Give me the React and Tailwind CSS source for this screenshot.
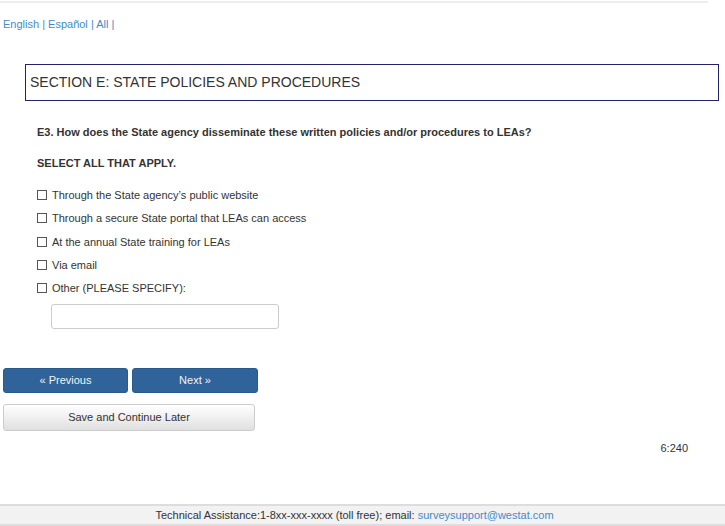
const options = [
  'Through the State agency’s public website',
  'Through a secure State portal that LEAs can access',
  'At the annual State training for LEAs',
  'Via email',
  'Other (PLEASE SPECIFY):',
];

export default function App() {
  return (
    <div className="relative h-[526px] w-[725px] overflow-hidden bg-white font-['Liberation_Sans',Arial,sans-serif] text-[#333]">
      {/* top rule */}
      <div className="mt-[1px] h-[2px] w-[708px] bg-[#eee]" />

      {/* language links */}
      <div className="mt-[14px] pl-[3px] text-[11px] leading-[14px] text-[#428bca]">
        <span>English</span> | <span>Español</span> | <span>All</span> |
      </div>

      {/* section header */}
      <div className="ml-[25px] mt-[33px] flex h-[37px] w-[694px] items-center border border-[#22226e] pl-[4px] text-[14px]">
        SECTION E: STATE POLICIES AND PROCEDURES
      </div>

      <div className="pl-[37px]">
        <p className="mt-[24px] text-[11px] font-bold leading-[14px]">
          E3. How does the State agency disseminate these written policies and/or procedures to LEAs?
        </p>
        <p className="mt-[17px] text-[11px] font-bold leading-[14px]">SELECT ALL THAT APPLY.</p>

        <div className="mt-[18px] flex flex-col gap-[9.3px]">
          {options.map(o => (
            <label key={o} className="flex h-[14px] items-center text-[11px] leading-[14px]">
              <span className="mr-[5px] h-[10px] w-[10px] border border-[#555] bg-white" />
              {o}
            </label>
          ))}
        </div>

        <input
          type="text"
          className="ml-[14px] mt-[9px] block h-[25px] w-[228px] rounded-[3px] border border-[#ccc] outline-none"
        />
      </div>

      {/* nav buttons */}
      <div className="ml-[3px] mt-[39px] flex gap-[4px]">
        <button className="h-[25px] w-[125px] rounded-[3px] border border-[#285a8a] bg-[#2f6399] text-[11px] text-[#f4f4f4]">
          « Previous
        </button>
        <button className="h-[25px] w-[126px] rounded-[3px] border border-[#285a8a] bg-[#2f6399] text-[11px] text-[#f4f4f4]">
          Next »
        </button>
      </div>
      <button className="ml-[3px] mt-[11px] block h-[27px] w-[252px] rounded-[3px] border border-[#ccc] bg-gradient-to-b from-white to-[#e0e0e0] text-[11px] text-[#333]">
        Save and Continue Later
      </button>

      <div className="mt-[10px] w-[688px] text-right text-[11px] leading-[14px]">6:240</div>

      {/* footer */}
      <div className="absolute bottom-0 left-0 flex h-[22px] w-full items-center justify-center border-y-2 border-[#ddd] bg-[#f2f2f2] pr-[16px] text-[11px]">
        <span>
          Technical Assistance:1-8xx-xxx-xxxx (toll free); email:{' '}
          <span className="text-[#428bca]">surveysupport@westat.com</span>
        </span>
      </div>
    </div>
  );
}
